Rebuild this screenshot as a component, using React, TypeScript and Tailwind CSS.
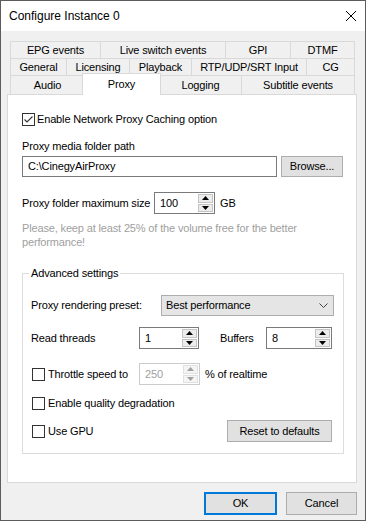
import React from 'react';

type Tab = { label: string; cls: string; selected?: boolean };

const tabRows: { h: string; tabs: Tab[] }[] = [
  {
    h: 'h-[17px]',
    tabs: [
      { label: 'EPG events', cls: 'w-[90px]' },
      { label: 'Live switch events', cls: 'w-[125px]' },
      { label: 'GPI', cls: 'w-[65px]' },
      { label: 'DTMF', cls: 'w-[65px] border-r' },
    ],
  },
  {
    h: 'h-[17px]',
    tabs: [
      { label: 'General', cls: 'w-[56px]' },
      { label: 'Licensing', cls: 'w-[63px]' },
      { label: 'Playback', cls: 'w-[62px]' },
      { label: 'RTP/UDP/SRT Input', cls: 'w-[115px]' },
      { label: 'CG', cls: 'w-[49px] border-r' },
    ],
  },
  {
    h: 'h-[19px]',
    tabs: [
      { label: 'Audio', cls: 'w-[74px]' },
      { label: 'Proxy', cls: 'w-[79px]', selected: true },
      { label: 'Logging', cls: 'w-[82px]' },
      { label: 'Subtitle events', cls: 'w-[114px] border-r' },
    ],
  },
];

const Arrow = ({ up, color }: { up?: boolean; color: string }) => (
  <svg width="7" height="4" viewBox="0 0 7 4">
    <polygon points={up ? '0,4 7,4 3.5,0' : '0,0 7,0 3.5,4'} fill={color} />
  </svg>
);

const Spinner = ({
  value,
  width,
  disabled,
}: {
  value: string;
  width: string;
  disabled?: boolean;
}) => (
  <div
    className={`${width} shrink-0 h-[22px] flex bg-white border ${
      disabled ? 'border-[#cccccc] text-[#a0a0a0]' : 'border-[#7a7a7a]'
    }`}
  >
    <div className="flex-1 flex items-center pl-[5px]">{value}</div>
    <div className="w-[17px] flex flex-col p-[1px] gap-[1px]">
      <div
        className={`flex-1 flex items-center justify-center border ${
          disabled ? 'border-[#e0e0e0] bg-[#f4f4f4]' : 'border-[#c4c4c4] bg-[#ececec]'
        }`}
      >
        <Arrow up color={disabled ? '#a0a0a0' : '#000'} />
      </div>
      <div
        className={`flex-1 flex items-center justify-center border ${
          disabled ? 'border-[#e0e0e0] bg-[#f4f4f4]' : 'border-[#c4c4c4] bg-[#ececec]'
        }`}
      >
        <Arrow color={disabled ? '#a0a0a0' : '#000'} />
      </div>
    </div>
  </div>
);

const CheckBox = ({ checked }: { checked?: boolean }) => (
  <div className="w-[13px] h-[13px] border border-[#333333] bg-white flex items-center justify-center shrink-0">
    {checked && (
      <svg width="11" height="11" viewBox="0 0 11 11">
        <path d="M1.5 5.5 L4 8 L9.5 2.5" fill="none" stroke="#333" strokeWidth="1.1" />
      </svg>
    )}
  </div>
);

const App = () => {
  return (
    <div className="w-[366px] h-[521px] flex flex-col border border-[#5c5c5c] bg-[#f0f0f0] text-black font-['Liberation_Sans',Arial,sans-serif] text-[11px] leading-[13px] tracking-[-0.15px] whitespace-nowrap">
      {/* Title bar */}
      <div className="h-[30px] bg-white flex items-center justify-between pl-[8px] pr-[9px] text-[12px] tracking-normal">
        <span>Configure Instance 0</span>
        <svg width="10" height="10" viewBox="0 0 10 10">
          <path d="M0 0 L10 10 M10 0 L0 10" stroke="#000" strokeWidth="1" />
        </svg>
      </div>

      <div className="flex-1 flex flex-col pl-[6px] pr-[8px] pt-[10px]">
        {/* Tabs */}
        <div className="ml-[3px] w-[345px] flex flex-col">
          {tabRows.map((row, i) => (
            <div key={i} className={`flex ${row.h}`}>
              {row.tabs.map((t) =>
                t.selected ? (
                  <div
                    key={t.label}
                    className={`${t.cls} relative z-10 -mx-[2px] -mt-[2px] h-[22px] self-start bg-white border-l border-t border-r border-[#d9d9d9] flex items-center justify-center`}
                  >
                    {t.label}
                  </div>
                ) : (
                  <div
                    key={t.label}
                    className={`${t.cls} border-l border-t border-[#d9d9d9] flex items-center justify-center`}
                  >
                    {t.label}
                  </div>
                )
              )}
            </div>
          ))}
        </div>

        {/* Panel */}
        <div className="w-[350px] h-[389px] border border-[#d9d9d9] bg-white pl-[14px] flex flex-col">
          <div className="mt-[18px] h-[13px] flex items-center gap-[2px]">
            <CheckBox checked />
            <span>Enable Network Proxy Caching option</span>
          </div>

          <div className="mt-[14px]">Proxy media folder path</div>
          <div className="mt-[3px] flex gap-[4px]">
            <div className="w-[255px] h-[21px] border border-[#7a7a7a] flex items-center pl-[5px]">
              C:\CinegyAirProxy
            </div>
            <button className="w-[62px] h-[21px] border border-[#adadad] bg-[#e1e1e1] flex items-center justify-center">
              Browse...
            </button>
          </div>

          <div className="mt-[15px] flex items-center">
            <span className="w-[132px] shrink-0">Proxy folder maximum size</span>
            <Spinner value="100" width="w-[61px]" />
            <span className="ml-[5px]">GB</span>
          </div>

          <div className="mt-[7px] leading-[14px] text-[#a0a0a0]">
            Please, keep at least 25% of the volume free for the better
            <br />
            performance!
          </div>

          {/* Advanced settings group */}
          <fieldset className="mt-[18px] w-[322px] border border-[#dcdcdc] pl-[8px] pb-[11px] flex flex-col">
            <legend className="-ml-[2px] px-[2px] leading-[13px]">Advanced settings</legend>

            <div className="mt-[15px] flex items-center">
              <span className="w-[130px] shrink-0">Proxy rendering preset:</span>
              <div className="w-[173px] h-[21px] border border-[#adadad] bg-[#e5e5e5] flex items-center justify-between pl-[4px] pr-[5px]">
                <span>Best performance</span>
                <svg width="9" height="5" viewBox="0 0 9 5">
                  <path d="M0.5 0.5 L4.5 4.5 L8.5 0.5" fill="none" stroke="#444" strokeWidth="1" />
                </svg>
              </div>
            </div>

            <div className="mt-[11px] flex items-center">
              <span className="w-[108px] shrink-0">Read threads</span>
              <Spinner value="1" width="w-[60px]" />
              <span className="ml-[21px] w-[46px] shrink-0">Buffers</span>
              <Spinner value="8" width="w-[66px]" />
            </div>

            <div className="mt-[14px] flex items-center">
              <div className="w-[108px] shrink-0 flex items-center gap-[3px] pl-[1px]">
                <CheckBox />
                <span>Throttle speed to</span>
              </div>
              <Spinner value="250" width="w-[61px]" disabled />
              <span className="ml-[5px]">% of realtime</span>
            </div>

            <div className="mt-[12px] h-[13px] flex items-center gap-[3px] pl-[1px]">
              <CheckBox />
              <span>Enable quality degradation</span>
            </div>

            <div className="mt-[10px] h-[22px] flex items-center">
              <div className="w-[196px] shrink-0 flex items-center gap-[3px] pl-[1px]">
                <CheckBox />
                <span>Use GPU</span>
              </div>
              <button className="w-[105px] h-[22px] border border-[#adadad] bg-[#e1e1e1] flex items-center justify-center">
                Reset to defaults
              </button>
            </div>
          </fieldset>
        </div>

        {/* Dialog buttons */}
        <div className="mt-[9px] flex justify-end gap-[9px]">
          <button className="w-[73px] h-[23px] border-2 border-[#0078d7] bg-[#e1e1e1] flex items-center justify-center">
            OK
          </button>
          <button className="w-[71px] h-[23px] border border-[#adadad] bg-[#e1e1e1] flex items-center justify-center">
            Cancel
          </button>
        </div>
      </div>
    </div>
  );
};

export default App;
